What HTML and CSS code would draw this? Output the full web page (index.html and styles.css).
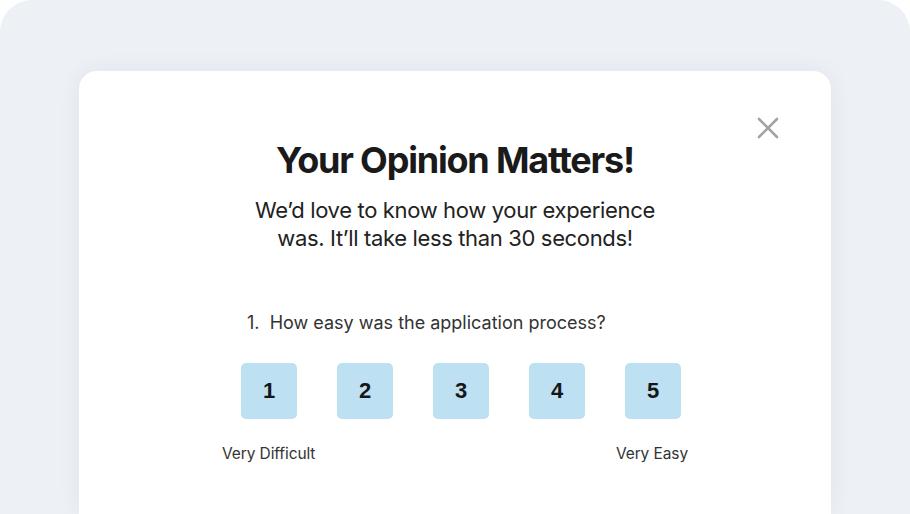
FILE: index.html
```html
<!DOCTYPE html>
<html lang="en">
<head>
    <meta charset="UTF-8">
    <meta name="viewport" content="width=device-width, initial-scale=1.0">
    <title>Your Opinion Matters!</title>
    <link rel="stylesheet" href="styles.css">
</head>
<body>
    <div class="panel">
        <div class="card">
            <button class="close" aria-label="Close">
                <svg width="22" height="22" viewBox="0 0 22 22">
                    <path d="M2 2 L20 20 M20 2 L2 20" stroke="#a3a3a3" stroke-width="2.6" stroke-linecap="round" fill="none"/>
                </svg>
            </button>

            <h1>Your Opinion Matters!</h1>
            <p class="intro">We’d love to know how your experience<br>was. It’ll take less than 30 seconds!</p>

            <!-- Pregunta 1 -->
            <div class="question">
                <p class="question-text">1.&nbsp; How easy was the application process?</p>
                <div class="scale">
                    <button class="option">1</button>
                    <button class="option">2</button>
                    <button class="option">3</button>
                    <button class="option">4</button>
                    <button class="option">5</button>
                </div>
                <div class="scale-labels">
                    <span>Very Difficult</span>
                    <span>Very Easy</span>
                </div>
            </div>
        </div>
    </div>
</body>
</html>
```

FILE: styles.css
```css
* {
    box-sizing: border-box;
    margin: 0;
    padding: 0;
    font-family: Inter, "Noto Sans", sans-serif;
}

body {
    background-color: #ffffff;
    height: 514px;
    overflow: hidden;
}

.panel {
    height: 514px;
    padding: 71px 79px 0;
    background-color: #edf0f5;
    border-radius: 32px 32px 0 0;
}

.card {
    position: relative;
    height: 100%;
    padding-top: 67px;
    display: flex;
    flex-direction: column;
    align-items: center;
    background-color: #ffffff;
    border-radius: 18px 18px 0 0;
    box-shadow: 0 0 24px rgba(30, 40, 60, 0.06);
}

.close {
    position: absolute;
    top: 46px;
    right: 52px;
    width: 22px;
    height: 22px;
    background: none;
    border: none;
    cursor: pointer;
}

.close svg {
    display: block;
}

h1 {
    font-size: 36px;
    line-height: 44px;
    font-weight: 700;
    letter-spacing: -1.2px;
    color: #1a1a1a;
}

.intro {
    margin-top: 14px;
    font-size: 22px;
    line-height: 28px;
    text-align: center;
    letter-spacing: -0.35px;
    color: #222;
}

.question {
    width: 466px;
    margin-top: 59px;
}

.question-text {
    padding-left: 25px;
    font-size: 18px;
    line-height: 24px;
    letter-spacing: 0;
    color: #333;
}

.scale {
    display: flex;
    gap: 40px;
    margin-top: 28px;
    padding-left: 19px;
}

.option {
    width: 56px;
    height: 56px;
    font-family: "Liberation Sans", Arial, sans-serif;
    font-size: 22px;
    font-weight: bold;
    color: #161616;
    background-color: #bde0f3;
    border: none;
    border-radius: 5px;
    cursor: pointer;
}

.scale-labels {
    display: flex;
    justify-content: space-between;
    margin-top: 25px;
    font-size: 15.5px;
    line-height: 20px;
    letter-spacing: -0.1px;
    color: #333;
}
```
